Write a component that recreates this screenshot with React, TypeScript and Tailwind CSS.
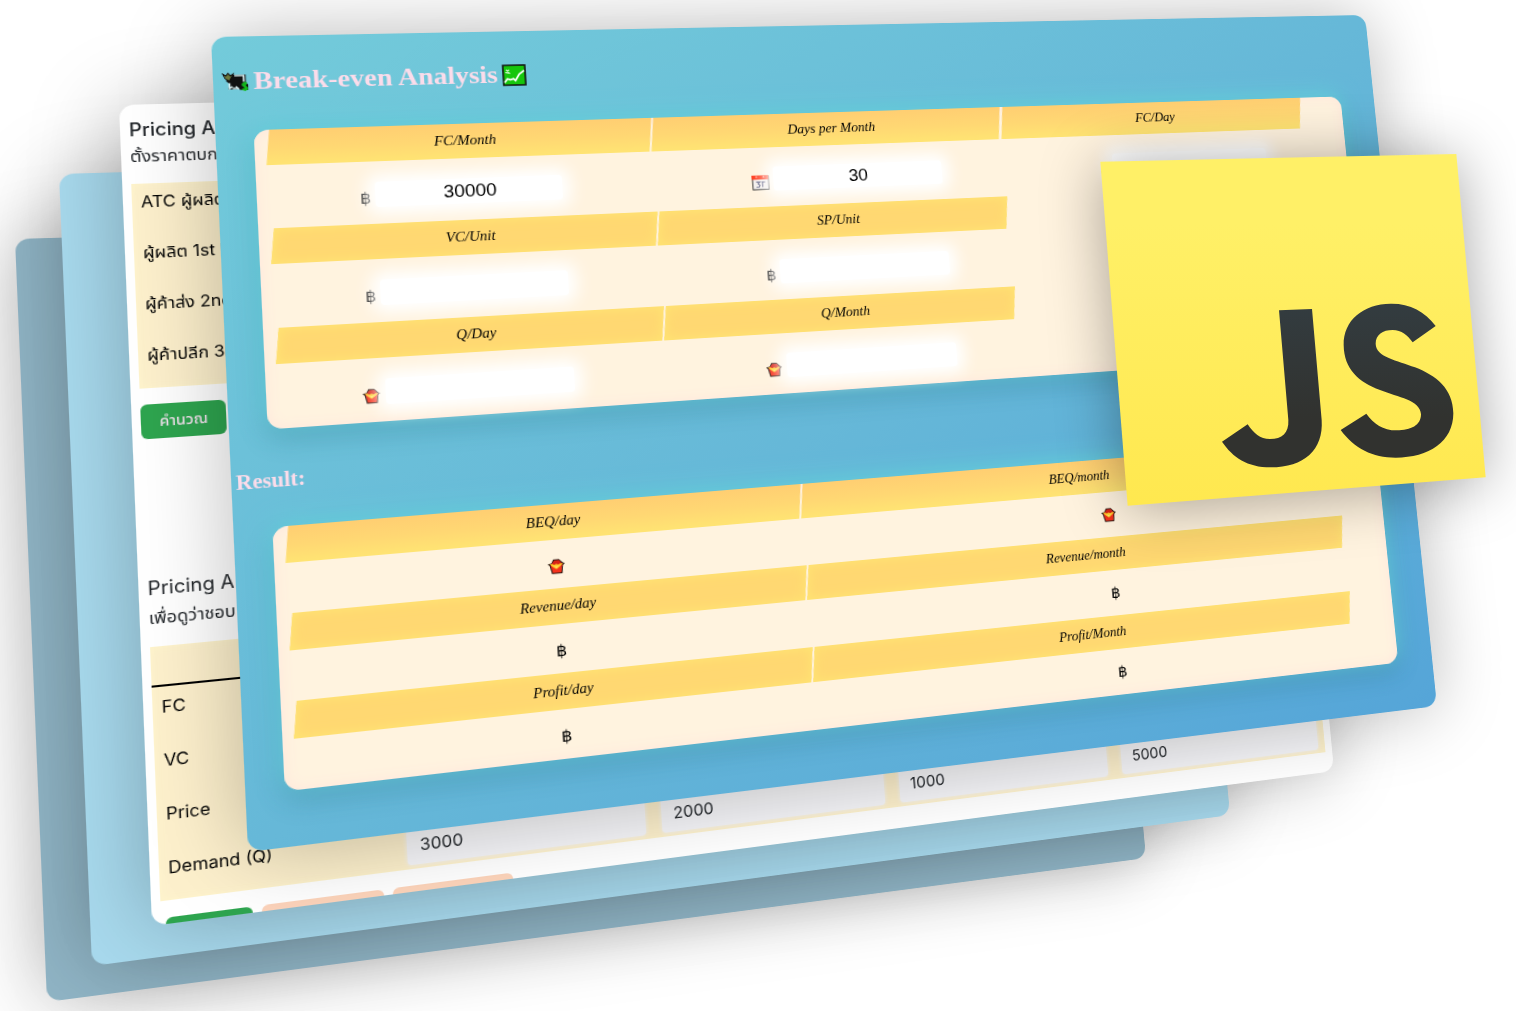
import type { CSSProperties, ReactNode } from "react";

type Point = [number, number];
type Quad = [Point, Point, Point, Point];

const CARD_W = 1200;
const CARD_H = 800;

/** Perspective matrix that lays a card on the quad: top left, top right, bottom right, bottom left. */
function project([[x0, y0], [x1, y1], [x2, y2], [x3, y3]]: Quad): CSSProperties {
  const dx1 = x1 - x2;
  const dx2 = x3 - x2;
  const sx = x0 - x1 + x2 - x3;
  const dy1 = y1 - y2;
  const dy2 = y3 - y2;
  const sy = y0 - y1 + y2 - y3;
  const den = dx1 * dy2 - dx2 * dy1;
  const g = (sx * dy2 - dx2 * sy) / den;
  const h = (dx1 * sy - sx * dy1) / den;
  const m = [
    (x1 - x0 + g * x1) / CARD_W, (y1 - y0 + g * y1) / CARD_W, 0, g / CARD_W,
    (x3 - x0 + h * x3) / CARD_H, (y3 - y0 + h * y3) / CARD_H, 0, h / CARD_H,
    0, 0, 1, 0,
    x0, y0, 0, 1,
  ];
  return { transform: `matrix3d(${m.join(",")})` };
}

const SLATE_QUAD: Quad = [[15, 239], [1086, 208], [1146, 858], [47, 1002]];
const SKY_QUAD: Quad = [[59, 174], [1166, 142], [1230, 815], [92, 966]];
const PRICING_QUAD: Quad = [[119, 105], [1268, 76], [1334, 771], [152, 926]];
const ANALYSIS_QUAD: Quad = [[211, 37], [1365, 15], [1437, 706], [248, 852]];

function Card({ quad, className, children }: { quad: Quad; className: string; children?: ReactNode }) {
  return (
    <section
      style={project(quad)}
      className={`absolute left-0 top-0 h-[800px] w-[1200px] origin-top-left overflow-hidden rounded-[14px] shadow-[0_0_80px_rgba(0,0,0,0.27)] ${className}`}
    >
      {children}
    </section>
  );
}

function Fries() {
  return (
    <svg viewBox="0 0 20 20" className="h-[18px] w-[18px]" aria-hidden="true">
      <path d="M5 6 7 2h6l4 4 2 1-2 2-1 9H5L3 9 1 7z" fill="#2b1a14" />
      <path d="M5 7 8 3h5l3 4v3H4z" fill="#d92317" />
      <path d="M4 8h12l-1 9H6z" fill="#f5321c" />
      <path d="M3 7h3l2 1 2-1 2 1 2-1h3l-3 3-4 3-4-3z" fill="#ffc928" />
      <path d="m7 9 3 1 3-1-3 3z" fill="#ffe96b" />
    </svg>
  );
}

function Calendar() {
  return (
    <svg viewBox="0 0 20 18" className="h-[18px] w-[18px]" aria-hidden="true">
      <path d="M1 1h18v16H1z" fill="#f3efec" stroke="#222" />
      <path d="M0 0h19v5H0z" fill="#ff3a1c" />
      <path d="M5 2h1M13 2h1" stroke="#fff" strokeWidth="2" />
      <path d="M5 8h4l-2 2 2 2-1 2H5M11 8h4M12 8v6" fill="none" stroke="#66688a" strokeWidth="1.3" />
    </svg>
  );
}

function MoneyChart() {
  return (
    <svg viewBox="0 0 26 22" className="h-[21px] w-[24px]" aria-hidden="true">
      <path d="M4 3h19v9l2 2v6h-7l-2-1H6l1-6-3-3z" fill="#111" />
      <path d="m1 2 3 2 2-3 2 3 3-2-2 4-2 4-4-3z" fill="#6f7a3b" stroke="#111" />
      <path d="M12 4h9v7M7 12v6l3-2M10 18h5" fill="none" stroke="#d8eef0" strokeWidth="1.8" />
      <path d="m13 16 3 3" stroke="#d8eef0" strokeWidth="1.6" />
      <path d="M24 13c-3-1-5 0-4 2s4 1 4 3-3 2-5 1M22 11v10" fill="none" stroke="#12b81c" strokeWidth="2" />
    </svg>
  );
}

function UpChart() {
  return (
    <svg viewBox="0 0 24 24" className="h-[23px] w-[23px]" aria-hidden="true">
      <path d="M1 1h22v22H1z" fill="#16c60c" stroke="#111" strokeWidth="1.6" />
      <path d="m2 20 3-4 3 1 3-1 2 2 4-7 5-4" fill="none" stroke="#fff" strokeWidth="1.8" />
      <path d="m4 6 3 3m0-3L4 9l4 1" fill="none" stroke="#c9f6c4" strokeWidth="1.3" />
    </svg>
  );
}

const Baht = () => <span className="text-base leading-5 text-black">฿</span>;

function BarHead({ id, children, top }: { id: string; children: ReactNode; top?: boolean }) {
  return (
    <th
      id={id}
      className={`relative isolate h-[36px] p-0 text-center text-sm font-normal italic text-black before:absolute before:inset-y-0 before:left-0 before:right-[2px] before:-z-10 before:-skew-x-6 before:content-[''] ${
        top
          ? "before:bg-linear-to-b before:from-[#ffce72] before:via-[#ffd773] before:to-[#ffe473]"
          : "before:bg-[#ffd872] before:shadow-[inset_0_0_12px_#ffe773]"
      }`}
    >
      {children}
    </th>
  );
}

const FIELD_SHIFT = ["pr-5", "pl-6", "pl-12"];

function Field({ labelId, value, icon, col }: { labelId: string; value?: string; icon: ReactNode; col: 0 | 1 | 2 }) {
  return (
    <td className="h-[64px] p-0">
      <div className={`flex items-center justify-center gap-1 pt-1 ${FIELD_SHIFT[col]}`}>
        <span className="flex w-[20px] justify-end pt-2">{icon}</span>
        <input
          aria-labelledby={labelId}
          defaultValue={value}
          className="h-[26px] w-[176px] rounded-[4px] bg-white text-center font-['Liberation_Sans',sans-serif] text-lg text-black shadow-[0_0_16px_8px_#ffffff] outline-none"
        />
      </div>
    </td>
  );
}

const PANEL =
  "ml-[34px] mr-[40px] rounded-[14px] bg-[#fff3df] pl-[12px] pr-[48px] shadow-[inset_0_0_14px_#ffe6dc,0_-4px_24px_#66d0dc,0_10px_24px_rgba(30,90,110,0.28)]";

function AnalysisCard() {
  return (
    <Card
      quad={ANALYSIS_QUAD}
      className="bg-linear-to-br from-[#73cbda] via-[#66b8d8] to-[#55a5d8] font-['Liberation_Serif',serif]"
    >
      <div className="flex h-full flex-col">
        <h1 className="flex h-[96px] items-center gap-1 pb-1 pl-2 text-[26px] font-bold leading-8 text-[#fbdcea]">
          <MoneyChart />
          Break-even Analysis
          <UpChart />
        </h1>
        <div className={PANEL}>
          <table className="w-full table-fixed border-collapse">
            <colgroup>
              <col className="w-[34%]" />
              <col className="w-[34%]" />
              <col className="w-[32%]" />
            </colgroup>
            <tbody>
              <tr>
                <BarHead top id="fc-month">FC/Month</BarHead>
                <BarHead top id="days">Days per Month</BarHead>
                <BarHead top id="fc-day">FC/Day</BarHead>
              </tr>
              <tr>
                <Field col={0} labelId="fc-month" value="30000" icon={<Baht />} />
                <Field col={1} labelId="days" value="30" icon={<Calendar />} />
                <Field col={2} labelId="fc-day" icon={<Baht />} />
              </tr>
              <tr>
                <BarHead id="vc-unit">VC/Unit</BarHead>
                <BarHead id="sp-unit">SP/Unit</BarHead>
              </tr>
              <tr>
                <Field col={0} labelId="vc-unit" icon={<Baht />} />
                <Field col={1} labelId="sp-unit" icon={<Baht />} />
              </tr>
              <tr>
                <BarHead id="q-day">Q/Day</BarHead>
                <BarHead id="q-month">Q/Month</BarHead>
              </tr>
              <tr>
                <Field col={0} labelId="q-day" icon={<Fries />} />
                <Field col={1} labelId="q-month" icon={<Fries />} />
              </tr>
            </tbody>
          </table>
        </div>
        <h2 className="flex h-[96px] items-center pl-1 pt-1 text-xl font-bold text-[#fbdcea]">Result:</h2>
        <div className={PANEL}>
          <table className="w-full table-fixed border-collapse">
            <colgroup>
              <col className="w-[485px]" />
              <col />
            </colgroup>
            {[
              ["BEQ/day", "BEQ/month", "fries"],
              ["Revenue/day", "Revenue/month", "baht"],
              ["Profit/day", "Profit/Month", "baht"],
            ].map(([day, month, unit], row) => (
              <tbody key={day}>
                <tr>
                  <BarHead top={row === 0} id={day}>{day}</BarHead>
                  <BarHead top={row === 0} id={month}>{month}</BarHead>
                </tr>
                <tr>
                  <td headers={day} className="h-[49px] p-0">
                    <div className="flex justify-center pt-1">{unit === "fries" ? <Fries /> : <Baht />}</div>
                  </td>
                  <td headers={month} className="h-[49px] p-0">
                    <div className="flex justify-center pl-14">{unit === "fries" ? <Fries /> : <Baht />}</div>
                  </td>
                </tr>
              </tbody>
            ))}
          </table>
        </div>
      </div>
    </Card>
  );
}

const PLAN_ROWS: { label: string; values: string[] }[] = [
  { label: "FC", values: ["", "", "", ""] },
  { label: "VC", values: ["", "", "", ""] },
  { label: "Price", values: ["", "", "", ""] },
  { label: "Demand (Q)", values: ["3000", "2000", "1000", "5000"] },
];

function PricingCard() {
  return (
    <Card
      quad={PRICING_QUAD}
      className="bg-white font-[Inter,'Noto_Sans_Thai','Noto_Sans',sans-serif] text-[#212529]"
    >
      <div className="px-2">
        <h2 className="pt-3 text-lg font-medium leading-7">Pricing A</h2>
        <p className="pb-4 text-base leading-6">ตั้งราคาตบก</p>
        <table className="w-full border-collapse bg-[#fdf0cc] text-black shadow-[inset_0_0_10px_#fff6cc]">
          <tbody>
            {["ATC ผู้ผลิต", "ผู้ผลิต 1st P", "ผู้ค้าส่ง 2nd", "ผู้ค้าปลีก 3rd"].map((label) => (
              <tr key={label}>
                <th className="h-[51px] whitespace-nowrap px-2 pb-4 text-left text-base font-normal">{label}</th>
              </tr>
            ))}
          </tbody>
        </table>
        <button className="mt-4 block h-[34px] w-[76px] rounded-[6px] bg-[#2da44e] text-sm font-medium text-[#f3e3ee]">
          คำนวณ
        </button>
        <h2 className="mt-[134px] text-lg leading-6">Pricing A</h2>
        <p className="pb-4 pt-1 text-base leading-6">เพื่อดูว่าชอบ</p>
        <table className="w-full table-fixed border-collapse bg-[#fdf0cc] text-black shadow-[inset_0_0_10px_#fff6cc]">
          <colgroup>
            <col className="w-[18%]" />
            <col />
            <col />
            <col />
            <col />
          </colgroup>
          <thead>
            <tr className="h-[38px] border-b-2 border-black">
              <td colSpan={5} />
            </tr>
          </thead>
          <tbody>
            {PLAN_ROWS.map(({ label, values }) => (
              <tr key={label}>
                <th id={label} className="h-[51px] px-2 pb-3 text-left text-base font-normal">
                  {label}
                </th>
                {values.map((value, i) => (
                  <td key={i} className="px-2 pt-1">
                    <input
                      aria-labelledby={label}
                      defaultValue={value}
                      className="block h-[38px] w-full rounded-[4px] bg-[#f6f6f9] px-3 text-base text-[#212529] shadow-[0_0_4px_#f6f6f9] outline-none"
                    />
                  </td>
                ))}
              </tr>
            ))}
          </tbody>
        </table>
        <div className="flex gap-2 pl-1 pt-4">
          <button aria-label="Calculate" className="h-[34px] w-[76px] rounded-[6px] bg-[#2da44e]" />
          <button aria-label="Add" className="h-[34px] w-[110px] rounded-[6px] bg-[#fcd3ba]" />
          <button aria-label="Remove" className="h-[34px] w-[112px] rounded-[6px] bg-[#fcd3ba]" />
        </div>
      </div>
    </Card>
  );
}

function JsLogo() {
  return (
    <svg
      viewBox="0 0 1260 1320"
      role="img"
      aria-label="JS"
      className="absolute left-[1080px] top-[80px] h-[440px] w-[420px] overflow-visible drop-shadow-[0_4px_30px_rgba(0,0,0,0.35)]"
    >
      <defs>
        <linearGradient id="tile" x1="0" y1="0" x2="0" y2="1">
          <stop offset="0.2" stopColor="#fff067" />
          <stop offset="1" stopColor="#ffe84f" />
        </linearGradient>
        <linearGradient id="ink" gradientUnits="userSpaceOnUse" x1="0" y1="670" x2="0" y2="1160">
          <stop offset="0" stopColor="#333c40" />
          <stop offset="0.7" stopColor="#31322f" />
        </linearGradient>
      </defs>
      <path d="M61 245 1129 222 1217 1192 143 1277Z" fill="url(#tile)" />
      <path
        d="M597 691 696 687 725 1020C731 1110 672 1162 572 1162 502 1162 458 1132 426 1085L503 1033C521 1060 540 1077 570 1077 606 1077 627 1060 625 1020Z"
        fill="url(#ink)"
      />
      <path
        d="M1067 738C1034 694 989 670 932 671 850 672 790 720 791 795 792 868 836 906 900 930 955 952 1021 960 1023 1003 1023 1036 993 1051 950 1051 908 1051 882 1032 859 1001L782 1050C824 1106 877 1133 947 1133 1047 1133 1120 1085 1120 1000 1119 925 1068 887 1005 862 952 841 888 832 887 791 887 764 908 750 938 750 965 750 982 765 998 787Z"
        fill="url(#ink)"
      />
    </svg>
  );
}

export default function App() {
  return (
    <main className="relative min-h-screen w-full overflow-hidden bg-white">
      <Card quad={SLATE_QUAD} className="bg-[#90b5c6]" />
      <Card quad={SKY_QUAD} className="bg-[#a8daee]" />
      <PricingCard />
      <AnalysisCard />
      <JsLogo />
    </main>
  );
}
